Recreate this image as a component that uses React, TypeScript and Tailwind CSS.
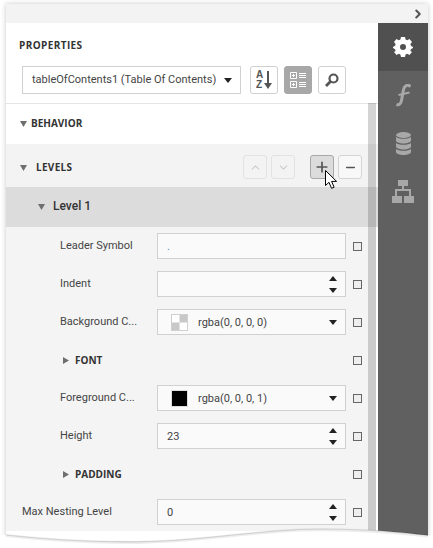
import { ChevronRight, Minus, Plus, ChevronUp, ChevronDown } from "lucide-react";
import type { ReactNode } from "react";

const heading = "font-['Open_Sans',sans-serif] text-[10px] font-bold text-[#333]";

const Tri = ({ open = true }: { open?: boolean }) => (
  <svg width="7" height="7" viewBox="0 0 7 7" className="shrink-0">
    {open ? <path d="M0 1h7L3.5 7z" fill="#6e6e6e" /> : <path d="M1 0l6 3.5L1 7z" fill="#6e6e6e" />}
  </svg>
);

const Check = () => <span className="block w-[9px] h-[9px] border border-[#666] bg-[#eee] shrink-0" />;

const Spin = () => (
  <svg width="8" height="17" viewBox="0 0 8 17" className="shrink-0">
    <path d="M0 5L4 0l4 5z" fill="#222" />
    <path d="M0 12h8l-4 5z" fill="#222" />
  </svg>
);

const Drop = () => (
  <svg width="8" height="5" viewBox="0 0 8 5" className="shrink-0">
    <path d="M0 0h8L4 5z" fill="#222" />
  </svg>
);

const Box = ({ children }: { children?: ReactNode }) => (
  <div className="w-[189px] h-[26px] border border-[#d0d0d0] bg-[#fafafa] flex items-center pl-[9px] pr-[8px] text-[11px] text-[#444]">
    {children}
  </div>
);

const Field = ({ label, indent = "pl-[54px]", gap = "w-[97px]", children }: { label: string; indent?: string; gap?: string; children: ReactNode }) => (
  <div className={`h-[38px] flex items-center ${indent}`}>
    <span className={`${gap} pt-[1px] text-[11px] text-[#444] whitespace-nowrap`}>{label}</span>
    <Box>{children}</Box>
    <span className="ml-[7px]"><Check /></span>
  </div>
);

const Value = ({ children }: { children: ReactNode }) => <span className="flex-1 pt-[2px]">{children}</span>;

const Sub = ({ label }: { label: string }) => (
  <div className="h-[38px] flex items-center pl-[56px]">
    <Tri open={false} />
    <span className={`ml-[6px] ${heading}`}>{label}</span>
    <span className="ml-auto mr-[14px]"><Check /></span>
  </div>
);

const SmallBtn = ({ children, cls }: { children: ReactNode; cls: string }) => (
  <div className={`w-[24px] h-[24px] rounded-[3px] border flex items-center justify-center ${cls}`}>{children}</div>
);

const ToolBtn = ({ children, cls }: { children: ReactNode; cls: string }) => (
  <div className={`w-[28px] h-[28px] rounded-[3px] border flex items-center justify-center ${cls}`}>{children}</div>
);

const Gear = () => (
  <svg width="20" height="20" viewBox="0 0 20 20">
    <path
      fillRule="evenodd"
      fill="#fff"
      d="M8 0h4l.6 2.6 1.6.7L16.5 2 19 5l-1.6 2.1.5 1.7L20 10v1l-2.100 1.200-.5 1.700L19 15l-2.500 3-2.300-1.300-1.600.7L12 20H8l-.6-2.600-1.600-.7L3.500 18 1 15l1.600-1.100-.5-1.700L0 11v-1l2.100-1.200.5-1.700L1 5l2.500-3 2.300 1.300 1.600-.7zM10 7a3 3 0 1 0 0 6 3 3 0 0 0 0-6z"
    />
  </svg>
);

export default function App() {
  return (
    <div className="w-[433px] h-[548px] bg-white overflow-hidden pt-[4px] pl-[6px] relative font-['Roboto',sans-serif]">
      <div className="w-[422px] h-[537px] shadow-[0_0_5px_rgba(0,0,0,0.22)] flex flex-col">
        <div className="h-[19px] bg-[#f3f3f3] flex items-center justify-end pr-[3px]">
          <ChevronRight size={14} strokeWidth={3.5} color="#555" />
        </div>
        <div className="flex-1 flex min-h-0 bg-white">
          <div className="w-[372px] relative">
            <div className="h-[81px] border-b border-[#e4e4e4] pl-[13px] pt-[17px]">
              <div className={`${heading} leading-[11px] tracking-[0.4px]`}>PROPERTIES</div>
              <div className="flex mt-[15px] ml-[3px]">
                <div className="w-[219px] h-[28px] border border-[#d0d0d0] flex items-center pl-[9px] pr-[8px] text-[11px] text-[#444] whitespace-nowrap">
                  <span className="flex-1">tableOfContents1 (Table Of Contents)</span>
                  <Drop />
                </div>
                <div className="ml-[9px]">
                  <ToolBtn cls="border-[#d0d0d0] bg-white">
                    <div className="flex items-center gap-[1px]">
                      <div className="flex flex-col text-[10px] leading-[10px] font-bold text-[#555] font-['Liberation_Sans',sans-serif]">
                        <span>A</span>
                        <span>Z</span>
                      </div>
                      <svg width="8" height="19" viewBox="0 0 8 19">
                        <path d="M4 0v15" stroke="#555" strokeWidth="2" />
                        <path d="M0 12h8l-4 6z" fill="#555" />
                      </svg>
                    </div>
                  </ToolBtn>
                </div>
                <div className="ml-[6px]">
                  <ToolBtn cls="border-[#a8a8a8] bg-[#a8a8a8]">
                    <svg width="16" height="16" viewBox="0 0 16 16" fill="none" stroke="#fff">
                      <path d="M.5.5h6v6h-6zM.5 9.500h6v6h-6zM2 3.500h3M3.500 2v3M2 12.500h3M3.500 11v3M9 1.500h7M9 3.500h7M9 5.500h7M9 10.500h7M9 12.500h7M9 14.500h7" />
                    </svg>
                  </ToolBtn>
                </div>
                <div className="ml-[6px]">
                  <ToolBtn cls="border-[#d0d0d0] bg-white">
                    <svg width="14" height="14" viewBox="0 0 14 14" fill="none">
                      <circle cx="8.500" cy="5.500" r="4" stroke="#555" strokeWidth="2.200" />
                      <path d="M5.500 8.500L1 13" stroke="#555" strokeWidth="2.800" />
                    </svg>
                  </ToolBtn>
                </div>
              </div>
            </div>

            <div className="h-[40px] flex items-center pl-[14px] pb-[2px]">
              <Tri />
              <span className={`ml-[4px] ${heading}`}>BEHAVIOR</span>
            </div>

            <div className="h-[43px] bg-[#f3f3f3] flex items-center pl-[14px] pt-[3px]">
              <Tri />
              <span className={`ml-[9px] ${heading} tracking-[0.3px]`}>LEVELS</span>
              <div className="ml-auto flex gap-[4px]">
                <SmallBtn cls="border-[#e2e2e2]"><ChevronUp size={13} color="#ccc" strokeWidth={2} /></SmallBtn>
                <SmallBtn cls="border-[#e2e2e2]"><ChevronDown size={13} color="#ccc" strokeWidth={2} /></SmallBtn>
              </div>
              <div className="ml-[15px] mr-[16px] flex gap-[4px]">
                <SmallBtn cls="border-[#a8a8a8] bg-[#dcdcdc]"><Plus size={16} color="#555" strokeWidth={2.6} /></SmallBtn>
                <SmallBtn cls="border-[#d4d4d4] bg-[#f8f8f8]"><Minus size={13} color="#555" strokeWidth={2.8} /></SmallBtn>
              </div>
            </div>

            <div className="h-[40px] bg-[#dcdcdc] flex items-center pl-[32px] pb-[2px]">
              <Tri />
              <span className="ml-[8px] text-[12px] font-medium text-[#333]">Level 1</span>
            </div>

            <div className="w-[370px] h-[304px] bg-[#f4f4f4] overflow-hidden">
              <Field label="Leader Symbol"><span className="pt-[2px] text-[#4a90b8]">.</span></Field>
              <Field label="Indent"><span className="ml-auto"><Spin /></span></Field>
              <Field label="Background C...">
                <svg width="17" height="17" viewBox="0 0 17 17" className="ml-[4px] shrink-0">
                  <rect width="17" height="17" fill="#fff" />
                  <rect x="8.500" width="8.500" height="8.500" fill="#c8c8c8" />
                  <rect y="8.500" width="8.500" height="8.500" fill="#c8c8c8" />
                  <rect x="0.500" y="0.500" width="16" height="16" fill="none" stroke="#d0d0d0" />
                </svg>
                <span className="ml-[10px] flex-1 pt-[2px]">rgba(0, 0, 0, 0)</span>
                <Drop />
              </Field>
              <Sub label="FONT" />
              <Field label="Foreground C...">
                <span className="ml-[4px] w-[17px] h-[17px] bg-black border border-[#ddd] shrink-0" />
                <span className="ml-[10px] flex-1 pt-[2px]">rgba(0, 0, 0, 1)</span>
                <Drop />
              </Field>
              <Field label="Height"><Value>23</Value><Spin /></Field>
              <Sub label="PADDING" />
              <Field label="Max Nesting Level" indent="pl-[16px]" gap="w-[135px]"><Value>0</Value><Spin /></Field>
            </div>

            <div className="absolute left-[362px] top-[80px] h-[428px] w-[8px] bg-[#000]/[0.17]" />
          </div>

          <div className="w-[50px] bg-[#606060] flex flex-col items-center">
            <div className="w-full h-[48px] bg-[#505050] flex items-center justify-center">
              <Gear />
            </div>
            <div className="h-[48px] flex items-center justify-center">
              <svg width="15" height="23" viewBox="0 0 15 23">
                <path d="M14.500 2.500C11.500 0 8.500 1.500 7.500 5.500L5.500 16.500C4.800 20 3 21.500 0.500 20.500" fill="none" stroke="#a8a8a8" strokeWidth="3" />
                <path d="M2.500 11L13.500 8.500" stroke="#a8a8a8" strokeWidth="2" />
              </svg>
            </div>
            <div className="h-[48px] flex items-center justify-center">
              <svg width="15" height="23" viewBox="0 0 15 23" fill="#a8a8a8">
                <ellipse cx="7.500" cy="3" rx="7.500" ry="3" />
                <path d="M0 5c2 2.400 13 2.400 15 0v3.500c0 1.600-3.500 3-7.500 3S0 10.100 0 8.500z" />
                <path d="M0 11c2 2.400 13 2.400 15 0v3.500c0 1.600-3.500 3-7.500 3S0 16.100 0 14.500z" />
                <path d="M0 17c2 2.400 13 2.400 15 0v3c0 1.600-3.500 3-7.500 3S0 21.600 0 20z" />
              </svg>
            </div>
            <div className="h-[48px] flex items-center justify-center">
              <svg width="22" height="23" viewBox="0 0 22 23" fill="#a8a8a8">
                <rect x="6" y="0" width="10" height="6" />
                <rect x="10" y="6" width="2" height="4" />
                <rect x="3" y="9" width="16" height="2" />
                <rect x="3" y="9" width="2" height="7" />
                <rect x="17" y="9" width="2" height="7" />
                <rect x="0" y="16" width="10" height="7" />
                <rect x="12" y="16" width="10" height="7" />
              </svg>
            </div>
          </div>
        </div>
      </div>

      {/* cursor */}
      <svg width="14" height="21" viewBox="0 0 14 21" className="absolute left-[325px] top-[170px]">
        <path d="M.5.5v15l3.500-3.200 2.500 6 2.600-1.100-2.500-5.800h5z" fill="#fff" stroke="#000" strokeWidth="1" />
      </svg>

      {/* torn bottom edge */}
      <svg width="433" height="30" viewBox="0 0 433 30" className="absolute left-0 top-[518px]">
        <path d="M0 16.500C50 22 100 23.500 130 23.500 190 23.500 240 14 300 11 340 10 375 11 433 18V30H0z" fill="#fff" />
        <path d="M6 17.500C50 22.500 100 24.500 130 24.500 190 24.500 240 15 300 12 340 11 375 12 428 18" fill="none" stroke="#000" strokeOpacity="0.07" strokeWidth="3" />
        <path d="M6 17C50 22 100 24 130 24 190 24 240 14.500 300 11.500 340 10.500 375 11.500 428 17.500" fill="none" stroke="#000" strokeOpacity="0.12" strokeWidth="1" />
      </svg>
    </div>
  );
}
